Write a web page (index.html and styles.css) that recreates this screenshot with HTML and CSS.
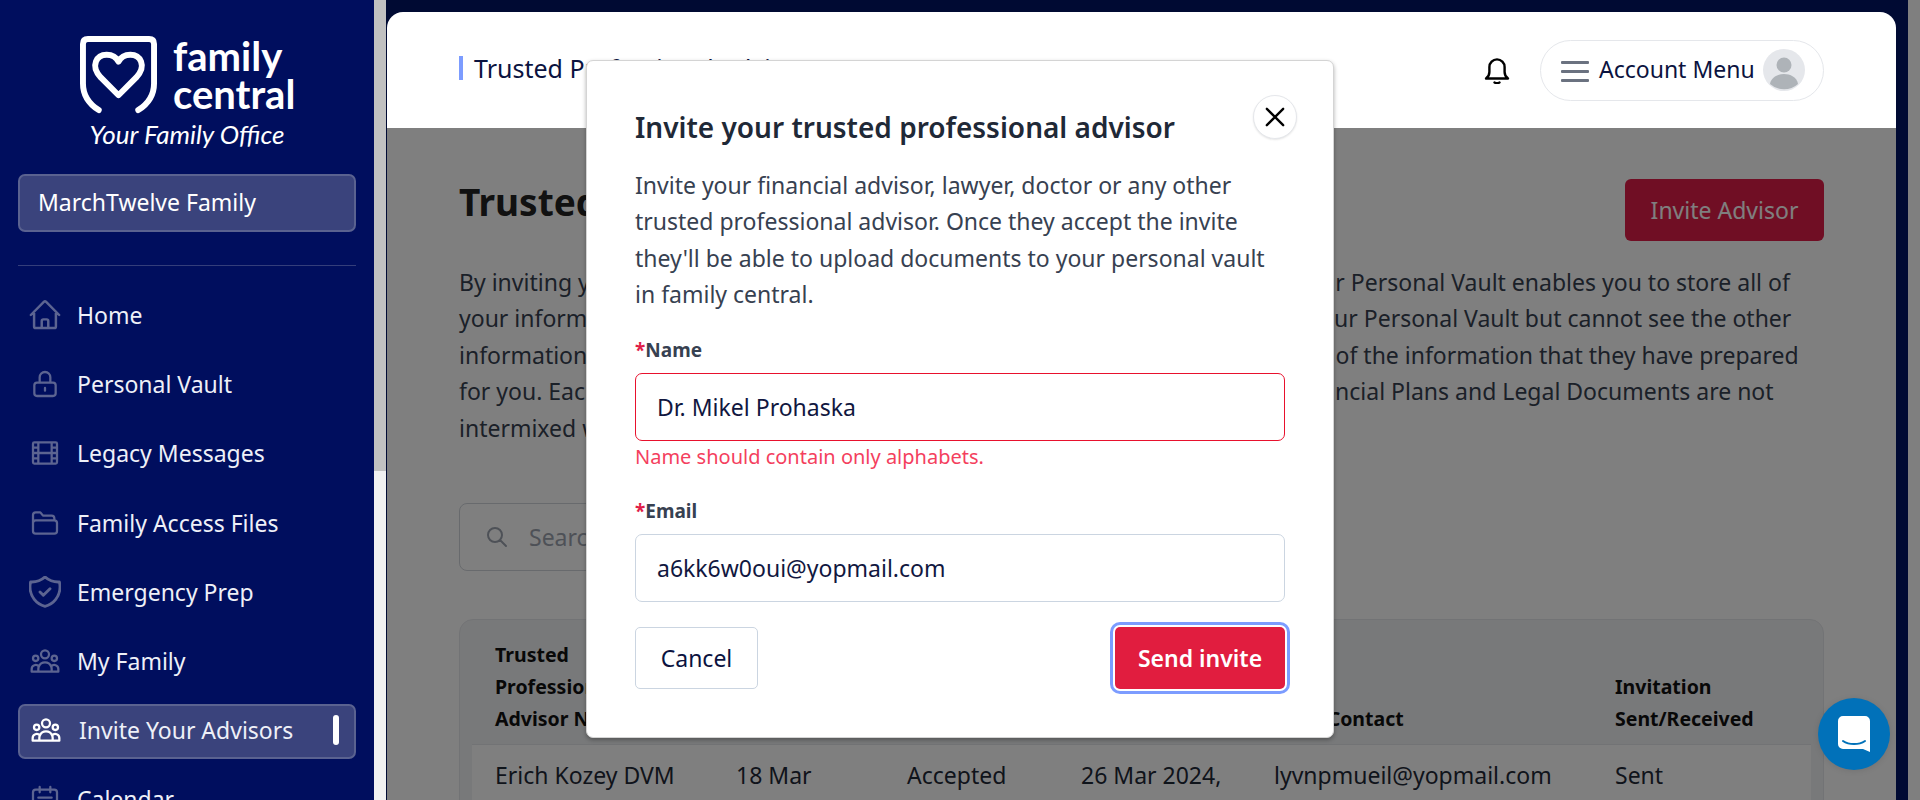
FILE: index.html
```html
<!DOCTYPE html>
<html lang="en">
<head>
    <meta charset="UTF-8">
    <title>Trusted Professional Advisors</title>
    <link rel="stylesheet" href="styles.css">
</head>
<body>
    <aside class="sidebar">
        <div class="logo">
            <div class="logo-row">
                <svg class="logo-mark" viewBox="0 0 78 78" fill="none" stroke="#fff" stroke-width="6" stroke-linecap="round" stroke-linejoin="round">
                    <path d="M19 75 C8 68 3 59 3 48 V8 Q3 3 8 3 H70 Q75 3 75 8 V48 C75 59 70 68 59 75"/>
                    <path d="M39 60 L21 42 C10 30 17 19 27 19 C33 19 37 22 39 26 C41 22 45 19 51 19 C61 19 68 30 57 42 Z"/>
                </svg>
                <div class="logo-name">family<br>central</div>
            </div>
            <div class="logo-tag">Your Family Office</div>
        </div>

        <div class="family-box">MarchTwelve Family</div>
        <div class="side-line"></div>

        <nav class="nav">
            <a class="nav-item" href="#">
                <svg class="nav-icon" viewBox="1 1 22 22"><path d="M2.25 12l8.954-8.955c.44-.439 1.152-.439 1.591 0L21.75 12M4.5 9.75v10.125c0 .621.504 1.125 1.125 1.125H9.75v-4.875c0-.621.504-1.125 1.125-1.125h2.25c.621 0 1.125.504 1.125 1.125V21h4.125c.621 0 1.125-.504 1.125-1.125V9.75M8.25 21h8.25"/></svg>
                Home
            </a>
            <a class="nav-item" href="#">
                <svg class="nav-icon" viewBox="0 0 24 24"><path d="M12 15v2m-6 4h12a2 2 0 002-2v-6a2 2 0 00-2-2H6a2 2 0 00-2 2v6a2 2 0 002 2zm10-10V7a4 4 0 00-8 0v4h8z"/></svg>
                Personal Vault
            </a>
            <a class="nav-item" href="#">
                <svg class="nav-icon" viewBox="0 0 24 24"><path d="M7 4v16M17 4v16M3 8h4m10 0h4M3 12h18M3 16h4m10 0h4M4 20h16a1 1 0 001-1V5a1 1 0 00-1-1H4a1 1 0 00-1 1v14a1 1 0 001 1z"/></svg>
                Legacy Messages
            </a>
            <a class="nav-item" href="#">
                <svg class="nav-icon" viewBox="0 0 24 24"><path d="M3 17V6a2 2 0 012-2h3.5l2 2.5H17a2 2 0 012 2V10M5 10h14a2 2 0 012 2v6a2 2 0 01-2 2H5a2 2 0 01-2-2v-6a2 2 0 012-2z"/></svg>
                Family Access Files
            </a>
            <a class="nav-item" href="#">
                <svg class="nav-icon" viewBox="2.400 2.400 19.200 19.200"><path d="M9 12l2 2 4-4m5.618-4.016A11.955 11.955 0 0112 2.944a11.955 11.955 0 01-8.618 3.04A12.02 12.02 0 003 9c0 5.591 3.824 10.29 9 11.622 5.176-1.332 9-6.03 9-11.622 0-1.042-.133-2.052-.382-3.016z"/></svg>
                Emergency Prep
            </a>
            <a class="nav-item" href="#">
                <svg class="nav-icon" viewBox="0 0 24 24"><path d="M17 20h5v-2a3 3 0 00-5.356-1.857M17 20H7m10 0v-2c0-.656-.126-1.283-.356-1.857M7 20H2v-2a3 3 0 015.356-1.857M7 20v-2c0-.656.126-1.283.356-1.857m0 0a5.002 5.002 0 019.288 0M15 7a3 3 0 11-6 0 3 3 0 016 0zm6 3a2 2 0 11-4 0 2 2 0 014 0zM7 10a2 2 0 11-4 0 2 2 0 014 0z"/></svg>
                My Family
            </a>
            <a class="nav-item active" href="#">
                <svg class="nav-icon" viewBox="0 0 24 24"><path d="M17 20h5v-2a3 3 0 00-5.356-1.857M17 20H7m10 0v-2c0-.656-.126-1.283-.356-1.857M7 20H2v-2a3 3 0 015.356-1.857M7 20v-2c0-.656.126-1.283.356-1.857m0 0a5.002 5.002 0 019.288 0M15 7a3 3 0 11-6 0 3 3 0 016 0zm6 3a2 2 0 11-4 0 2 2 0 014 0zM7 10a2 2 0 11-4 0 2 2 0 014 0z"/></svg>
                Invite Your Advisors
                <span class="nav-mark"></span>
            </a>
            <a class="nav-item" href="#">
                <svg class="nav-icon" viewBox="0 0 24 24"><path d="M8 7V3m8 4V3m-9 8h10M5 21h14a2 2 0 002-2V7a2 2 0 00-2-2H5a2 2 0 00-2 2v12a2 2 0 002 2z"/></svg>
                Calendar
            </a>
        </nav>
    </aside>

    <div class="side-scroll"><div class="side-thumb"></div></div>

    <div class="main">
        <div class="page">
            <header class="topbar">
                <h1 class="top-title">Trusted Professional Advisors</h1>
                <svg class="bell" viewBox="0 0 26 28" fill="none" stroke="#000" stroke-width="2.4" stroke-linecap="round" stroke-linejoin="round">
                    <path d="M2 22.5c2.2-1.6 3.4-3.6 3.4-6.5V11a7.6 7.6 0 0115.2 0v5c0 2.900 1.200 4.900 3.400 6.500z"/>
                    <path d="M10.500 26.500c1.500 .8 3.500 .8 5 0"/>
                </svg>
                <div class="account">
                    <div class="burger"><span></span><span></span><span></span></div>
                    <span class="account-text">Account Menu</span>
                    <svg class="avatar" viewBox="0 0 42 42">
                        <circle cx="21" cy="21" r="21" fill="#e5e7eb"/>
                        <circle cx="21" cy="16" r="7.500" fill="#aeb3b8"/>
                        <path d="M7 35c1-7 8-10 14-10s13 3 14 10a21 21 0 01-28 0z" fill="#aeb3b8"/>
                    </svg>
                </div>
            </header>

            <section class="content">
                <div class="content-head">
                    <h2 class="page-title">Trusted Professional Advisors</h2>
                    <button class="invite-btn">Invite Advisor</button>
                </div>
                <p class="intro">By inviting your trusted professional advisors to family central, you can share your Personal Vault enables you to store all of<br>your information in one place. Your advisors can upload documents directly to your Personal Vault but cannot see the other<br>information that you have stored there and you will also always be able to see all of the information that they have prepared<br>for you. Each advisor has their own separate folder within your Vault so their Financial Plans and Legal Documents are not<br>intermixed with those of your other advisors.</p>

                <div class="search">
                    <svg class="search-icon" viewBox="0 0 24 24"><path d="M21 21l-6-6m2-5a7 7 0 11-14 0 7 7 0 0114 0z"/></svg>
                    <span>Search</span>
                </div>

                <div class="table-card">
                    <div class="table-row table-head">
                        <div>Trusted Professional Advisor Name</div>
                        <div>Date</div>
                        <div>Status</div>
                        <div>Last Login</div>
                        <div>Main Contact</div>
                        <div>Invitation Sent/Received</div>
                    </div>
                    <div class="table-row table-body">
                        <div>Erich Kozey DVM</div>
                        <div>18 Mar</div>
                        <div>Accepted</div>
                        <div>26 Mar 2024,</div>
                        <div>lyvnpmueil@yopmail.com</div>
                        <div>Sent</div>
                    </div>
                </div>
            </section>
        </div>
        <div class="page-scroll"></div>
        <div class="backdrop"></div>
    </div>

    <div class="modal">
        <div class="modal-head">
            <h3 class="modal-title">Invite your trusted professional advisor</h3>
            <button class="modal-close">
                <svg viewBox="0 0 24 24"><path d="M5 5l14 14M19 5L5 19"/></svg>
            </button>
        </div>
        <p class="modal-text">Invite your financial advisor, lawyer, doctor or any other trusted professional advisor. Once they accept the invite they'll be able to upload documents to your personal vault in family central.</p>
        <form>
            <label class="field-label"><span class="star">*</span>Name</label>
            <input class="field field-error" type="text" value="Dr. Mikel Prohaska">
            <div class="error-text">Name should contain only alphabets.</div>
            <label class="field-label email-label"><span class="star">*</span>Email</label>
            <input class="field" type="text" value="a6kk6w0oui@yopmail.com">
            <div class="modal-actions">
                <button type="button" class="cancel-btn">Cancel</button>
                <button type="button" class="send-btn">Send invite</button>
            </div>
        </form>
    </div>

    <div class="chat">
        <svg viewBox="0 0 32 36">
            <path d="M5 0h22a5 5 0 015 5v31l-7-3H5a5 5 0 01-5-5V5a5 5 0 015-5z" fill="#fff"/>
            <path d="M5 25c6 4 16 4 22 0" fill="none" stroke="#0171b9" stroke-width="2" stroke-linecap="round"/>
        </svg>
    </div>
</body>
</html>
```

FILE: styles.css
```css
* {
    box-sizing: border-box;
}
body {
    font-family: "Noto Sans", "Open Sans", sans-serif;
    margin: 0;
    height: 800px;
    overflow: hidden;
    display: flex;
    color: #111827;
    background-color: #fff;
}

/* sidebar */
.sidebar {
    width: 374px;
    flex-shrink: 0;
    height: 800px;
    overflow: hidden;
    background-color: #000e5e;
    padding: 0 18px;
    color: #fff;
}
.logo {
    padding-top: 35px;
    height: 174px;
}
.logo-row {
    display: flex;
    align-items: center;
    gap: 16px;
    margin-left: 62px;
}
.logo-mark {
    width: 77px;
    height: 79px;
}
.logo-name {
    font-family: "Lato", sans-serif;
    font-size: 40px;
    line-height: 38px;
    font-weight: 700;
}
.logo-tag {
    font-family: "Lato", sans-serif;
    font-size: 26px;
    font-style: italic;
    text-align: center;
    margin-top: 4px;
}
.family-box {
    height: 58px;
    line-height: 52px;
    padding-left: 18px;
    font-size: 23px;
    background-color: #3a437c;
    border: 2px solid #5a6290;
    border-radius: 7px;
}
.side-line {
    height: 1px;
    background-color: #343e7a;
    margin-top: 33px;
    margin-bottom: 23px;
}
.nav {
    display: flex;
    flex-direction: column;
    gap: 14.200px;
}
.nav-item {
    display: flex;
    align-items: center;
    gap: 16px;
    height: 55px;
    padding-left: 9px;
    padding-bottom: 3px;
    font-size: 23px;
    color: #eef0f8;
    text-decoration: none;
    border: 2px solid transparent;
    border-radius: 7px;
    flex-shrink: 0;
}
.nav-icon {
    width: 32px;
    height: 32px;
    fill: none;
    stroke: #5c6491;
    stroke-width: 1.700;
    stroke-linecap: round;
    stroke-linejoin: round;
}
.nav-item.active {
    background-color: #3a437c;
    border-color: #5a6290;
    padding-left: 10px;
    gap: 17px;
}
.nav-item.active .nav-icon {
    stroke: #fff;
}
.nav-mark {
    width: 6px;
    height: 30px;
    border-radius: 3px;
    background-color: #fff;
    margin-left: auto;
    margin-right: 15px;
}
.side-scroll {
    width: 12px;
    flex-shrink: 0;
    background-color: #f1f1f1;
}
.side-thumb {
    height: 471px;
    background-color: #c1c1c1;
}

/* main */
.main {
    flex: 1;
    min-width: 0;
    position: relative;
    display: flex;
    background-color: #001466;
    padding-left: 1px;
}
.page {
    flex: 1;
    min-width: 0;
    margin-top: 12px;
    margin-right: 12px;
    display: flex;
    flex-direction: column;
}
.page-scroll {
    width: 12px;
    flex-shrink: 0;
    background-color: #fff;
}
.backdrop {
    position: absolute;
    top: 0;
    left: 0;
    right: 0;
    bottom: 0;
    background-color: rgba(0, 0, 0, 0.5);
    z-index: 5;
}
.topbar {
    position: relative;
    z-index: 6;
    height: 116px;
    flex-shrink: 0;
    background-color: #fff;
    border-radius: 16px 16px 0 0;
    display: flex;
    align-items: center;
    padding: 0 72px 0 72px;
}
.top-title {
    font-size: 25px;
    font-weight: 400;
    color: #0b1340;
    margin: 0 auto 5px 0;
    padding-left: 11px;
    border-left: 4px solid #7c9cff;
    line-height: 24px;
}
.bell {
    width: 26px;
    height: 28px;
    margin-right: 30px;
}
.account {
    width: 284px;
    height: 61px;
    border: 1px solid #e5e7eb;
    border-radius: 31px;
    display: flex;
    align-items: center;
    padding: 0 18px 0 20px;
}
.burger {
    width: 28px;
    margin-top: 2px;
    display: flex;
    flex-direction: column;
    gap: 6px;
}
.burger span {
    height: 3px;
    background-color: #6b7280;
    border-radius: 1px;
}
.account-text {
    font-size: 23px;
    color: #0b1340;
    margin-left: 10px;
    margin-bottom: 2px;
    flex: 1;
    white-space: nowrap;
}
.avatar {
    width: 42px;
    height: 42px;
}
.content {
    flex: 1;
    background-color: #fff;
    padding: 0 72px;
    overflow: hidden;
}
.content-head {
    display: flex;
    justify-content: space-between;
    align-items: center;
    padding-top: 51px;
}
.page-title {
    font-size: 37px;
    line-height: 46px;
    font-weight: 700;
    margin: 0;
    padding-bottom: 16px;
    color: #222;
}
.invite-btn {
    width: 199px;
    height: 62px;
    font-family: inherit;
    font-size: 23px;
    color: #fff;
    background-color: #e11d48;
    border: none;
    border-radius: 6px;
}
.intro {
    font-size: 23px;
    line-height: 36.400px;
    color: #374151;
    margin: 23px 0 0;
    white-space: nowrap;
}
.search {
    width: 640px;
    height: 68px;
    margin-top: 57px;
    border: 1px solid #d1d5db;
    border-radius: 8px;
    display: flex;
    align-items: center;
    padding-left: 25px;
    gap: 20px;
    font-size: 23px;
    color: #9ca3af;
}
.search-icon {
    width: 24px;
    height: 24px;
    fill: none;
    stroke: #9ca3af;
    stroke-width: 2;
    stroke-linecap: round;
}
.table-card {
    margin-top: 48px;
    background-color: #f1f2f4;
    border: 1px solid #e5e7eb;
    border-radius: 14px;
    padding: 0 12px;
}
.table-row {
    display: grid;
    grid-template-columns: 241px 171px 174px 193px 341px 1fr;
    padding-left: 23px;
}
.table-head {
    height: 124px;
    padding-top: 18px;
    align-items: end;
    padding-bottom: 9px;
    font-size: 19.500px;
    line-height: 32px;
    font-weight: 700;
    color: #111;
}
.table-head div:first-child {
    width: 170px;
}
.table-head div:last-child {
    width: 170px;
}
.table-body {
    background-color: #fff;
    border-top: 1px solid #e5e7eb;
    height: 80px;
    padding-top: 14px;
    font-size: 23px;
    color: #1f2937;
}

/* modal */
.modal {
    position: absolute;
    left: 586px;
    top: 60px;
    width: 748px;
    height: 678px;
    background-color: #fff;
    border: 1px solid #d4d4d4;
    border-radius: 7px;
    box-shadow: 0 2px 4px rgba(0, 0, 0, 0.3);
    padding: 34px 48px 0;
    z-index: 10;
}
.modal-head {
    display: flex;
    justify-content: space-between;
    align-items: flex-start;
    margin-right: -12px;
}
.modal-title {
    font-size: 28px;
    font-weight: 600;
    color: #1f2937;
    margin: 14px 0 0;
    line-height: 36px;
}
.modal-close {
    width: 44px;
    height: 44px;
    border-radius: 50%;
    background-color: #fff;
    border: 1px solid #e5e7eb;
    box-shadow: 0 1px 2px rgba(0, 0, 0, 0.1);
    padding: 7px;
}
.modal-close svg {
    display: block;
    fill: none;
    stroke: #000;
    stroke-width: 2;
    stroke-linecap: round;
}
.modal-text {
    font-size: 23px;
    line-height: 36.300px;
    color: #374151;
    margin: 22px 0 0;
    max-width: 640px;
}
.field-label {
    display: block;
    font-size: 19px;
    font-weight: 700;
    color: #374151;
    margin-top: 24px;
    line-height: 28px;
}
.email-label {
    margin-top: 28px;
}
.star {
    color: #e11d48;
}
.field {
    display: block;
    width: 100%;
    height: 68px;
    margin-top: 9px;
    padding: 0 21px;
    font-family: inherit;
    font-size: 23px;
    color: #11173f;
    border: 1px solid #cbd5e1;
    border-radius: 7px;
    outline: none;
}
.field-error {
    border-color: #e8112d;
}
.error-text {
    font-size: 20px;
    line-height: 24px;
    color: #f43f5e;
    margin-top: 4px;
}
.modal-actions {
    display: flex;
    justify-content: space-between;
    margin-top: 25px;
}
.cancel-btn {
    width: 123px;
    height: 62px;
    font-family: inherit;
    font-size: 23px;
    color: #0b1340;
    background-color: #fff;
    border: 1px solid #cbd5e1;
    border-radius: 5px;
}
.send-btn {
    width: 170px;
    height: 62px;
    font-family: inherit;
    font-size: 23px;
    font-weight: 600;
    color: #fff;
    background-color: #e11d3f;
    border: none;
    border-radius: 5px;
    box-shadow: 0 0 0 2px #fff, 0 0 0 5px #7c9cff;
}
.chat {
    position: absolute;
    left: 1818px;
    top: 698px;
    width: 72px;
    height: 72px;
    border-radius: 50%;
    background-color: #0171b9;
    box-shadow: 0 1px 6px rgba(0, 0, 0, 0.1);
    display: flex;
    align-items: center;
    justify-content: center;
    z-index: 10;
}
.chat svg {
    width: 32px;
    height: 36px;
}
```
